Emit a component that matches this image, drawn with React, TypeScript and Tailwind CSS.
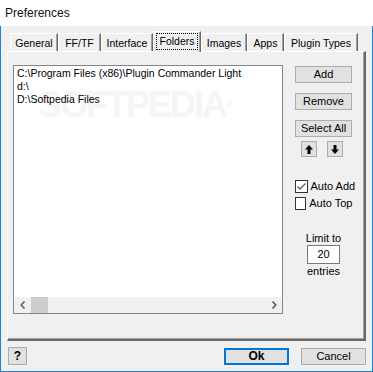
import React from "react";

const tabs = [
    { label: "General", w: "w-[48px]" },
    { label: "FF/TF", w: "w-[43px]" },
    { label: "Interface", w: "w-[52px]" },
    { label: "Folders", w: "w-[48px]", active: true },
    { label: "Images", w: "w-[46px]" },
    { label: "Apps", w: "w-[37px]" },
    { label: "Plugin Types", w: "w-[74px]" },
];

const folders = [
    "C:\\Program Files (x86)\\Plugin Commander Light",
    "d:\\",
    "D:\\Softpedia Files",
];

function Btn({ children, className = "" }: { children: React.ReactNode; className?: string }) {
    return (
        <div className={`flex items-center justify-center bg-[#e1e1e1] border border-[#adadad] ${className}`}>
            {children}
        </div>
    );
}

function Check({ checked, label }: { checked?: boolean; label: string }) {
    return (
        <div className="flex items-center h-[17px] w-[58px]">
            <div className="w-[13px] h-[13px] border border-[#333333] bg-white flex items-center justify-center">
                {checked && (
                    <svg width="11" height="11" viewBox="0 0 11 11">
                        <path d="M1.5 5.5 L4 8 L9.5 2.5" fill="none" stroke="#5a5a5a" strokeWidth="1.3" />
                    </svg>
                )}
            </div>
            <span className="ml-[3px] whitespace-nowrap">{label}</span>
        </div>
    );
}

export default function App() {
    return (
        <div className="w-[373px] h-[372px] flex flex-col bg-white text-[11px] leading-[13px] text-black font-['Liberation_Sans',Arial,sans-serif] overflow-hidden">
            {/* title bar */}
            <div className="h-[26px] shrink-0 flex items-center pl-[5px] text-[12px] text-[#111111] bg-white">
                Preferences
            </div>

            {/* dialog body */}
            <div className="flex-1 flex flex-col bg-[#f0f0f0] border-l border-r border-b border-[#1c84d8] px-[6px]">
                {/* tab strip */}
                <div className="flex items-end h-[25px] pl-[3px] text-[10.5px]">
                    {tabs.map((t) =>
                        t.active ? (
                            <div
                                key={t.label}
                                className={`${t.w} h-[21px] -mb-px relative z-10 bg-[#f0f0f0] border-t border-l border-white border-r border-r-[#696969] shadow-[inset_-1px_0_0_#a0a0a0] flex items-start justify-center pt-[1px]`}
                            >
                                <span className="border border-dotted border-black px-[2px] leading-[15px]">{t.label}</span>
                            </div>
                        ) : (
                            <div
                                key={t.label}
                                className={`${t.w} h-[18px] bg-[#f0f0f0] border-t border-l border-white border-r border-r-[#696969] shadow-[inset_-1px_0_0_#a0a0a0] flex items-center justify-center pt-[2px]`}
                            >
                                {t.label}
                            </div>
                        )
                    )}
                </div>

                {/* panel */}
                <div className="h-[290px] flex border-t border-l border-white border-r-2 border-b-2 border-r-[#696969] border-b-[#696969] shadow-[inset_-1px_-1px_0_#a0a0a0]">
                    {/* list box */}
                    <div className="ml-[5px] mt-[13px] w-[270px] h-[249px] relative flex flex-col bg-white border border-[#828790]">
                        <div className="flex-1 pl-[3px] pt-[1px] relative overflow-hidden text-[10.5px]">
                            <div className="absolute left-[24px] top-[21px] text-[36px] leading-[36px] font-bold tracking-[-2px] text-[#f5f5f5] select-none">
                                SOFTPEDIA<span className="text-[9px] align-top">®</span>
                            </div>
                            {folders.map((f) => (
                                <div key={f} className="relative whitespace-nowrap">{f}</div>
                            ))}
                        </div>
                        <div className="h-[16px] flex items-center bg-[#f0f0f0]">
                            <div className="w-[17px] h-full flex items-center justify-center">
                                <svg width="6" height="8" viewBox="0 0 6 8">
                                    <path d="M4.5 0.5 L1.2 4 L4.5 7.5" fill="none" stroke="#606060" strokeWidth="1.6" />
                                </svg>
                            </div>
                            <div className="w-[17px] h-full bg-[#cdcdcd]" />
                            <div className="flex-1" />
                            <div className="w-[17px] h-full flex items-center justify-center">
                                <svg width="6" height="8" viewBox="0 0 6 8">
                                    <path d="M1.5 0.5 L4.8 4 L1.5 7.5" fill="none" stroke="#606060" strokeWidth="1.6" />
                                </svg>
                            </div>
                        </div>
                    </div>

                    {/* right column */}
                    <div className="flex-1 flex flex-col items-center">
                        <Btn className="mt-[14px] w-[57px] h-[17px]">Add</Btn>
                        <Btn className="mt-[10px] w-[57px] h-[17px]">Remove</Btn>
                        <Btn className="mt-[10px] w-[57px] h-[17px]">Select All</Btn>
                        <div className="mt-[4px] flex gap-[10px] -ml-[3px]">
                            <Btn className="w-[16px] h-[16px]">
                                <svg width="8" height="9" viewBox="0 0 8 9">
                                    <path d="M4 0 L8 4.5 L5.5 4.5 L5.5 9 L2.5 9 L2.5 4.5 L0 4.5 Z" fill="black" />
                                </svg>
                            </Btn>
                            <Btn className="w-[16px] h-[16px]">
                                <svg width="8" height="9" viewBox="0 0 8 9">
                                    <path d="M4 9 L8 4.5 L5.5 4.5 L5.5 0 L2.5 0 L2.5 4.5 L0 4.5 Z" fill="black" />
                                </svg>
                            </Btn>
                        </div>
                        <div className="mt-[21px] flex flex-col">
                            <Check checked label="Auto Add" />
                            <Check label="Auto Top" />
                        </div>
                        <div className="mt-[20px]">Limit to</div>
                        <div className="w-[33px] h-[19px] bg-white border border-[#7a7a7a] flex items-center justify-center">20</div>
                        <div className="mt-[1px]">entries</div>
                    </div>
                </div>

                {/* bottom buttons */}
                <div className="flex-1 flex items-center">
                    <Btn className="ml-[1px] w-[19px] h-[18px] font-bold text-[12px]">?</Btn>
                    <div className="flex-1" />
                    <div className="w-[65px] h-[17px] flex items-center justify-center bg-[#e1e1e1] border-2 border-[#0078d7] font-bold text-[12px]">Ok</div>
                    <Btn className="ml-[12px] w-[65px] h-[17px]">Cancel</Btn>
                </div>
            </div>
        </div>
    );
}
